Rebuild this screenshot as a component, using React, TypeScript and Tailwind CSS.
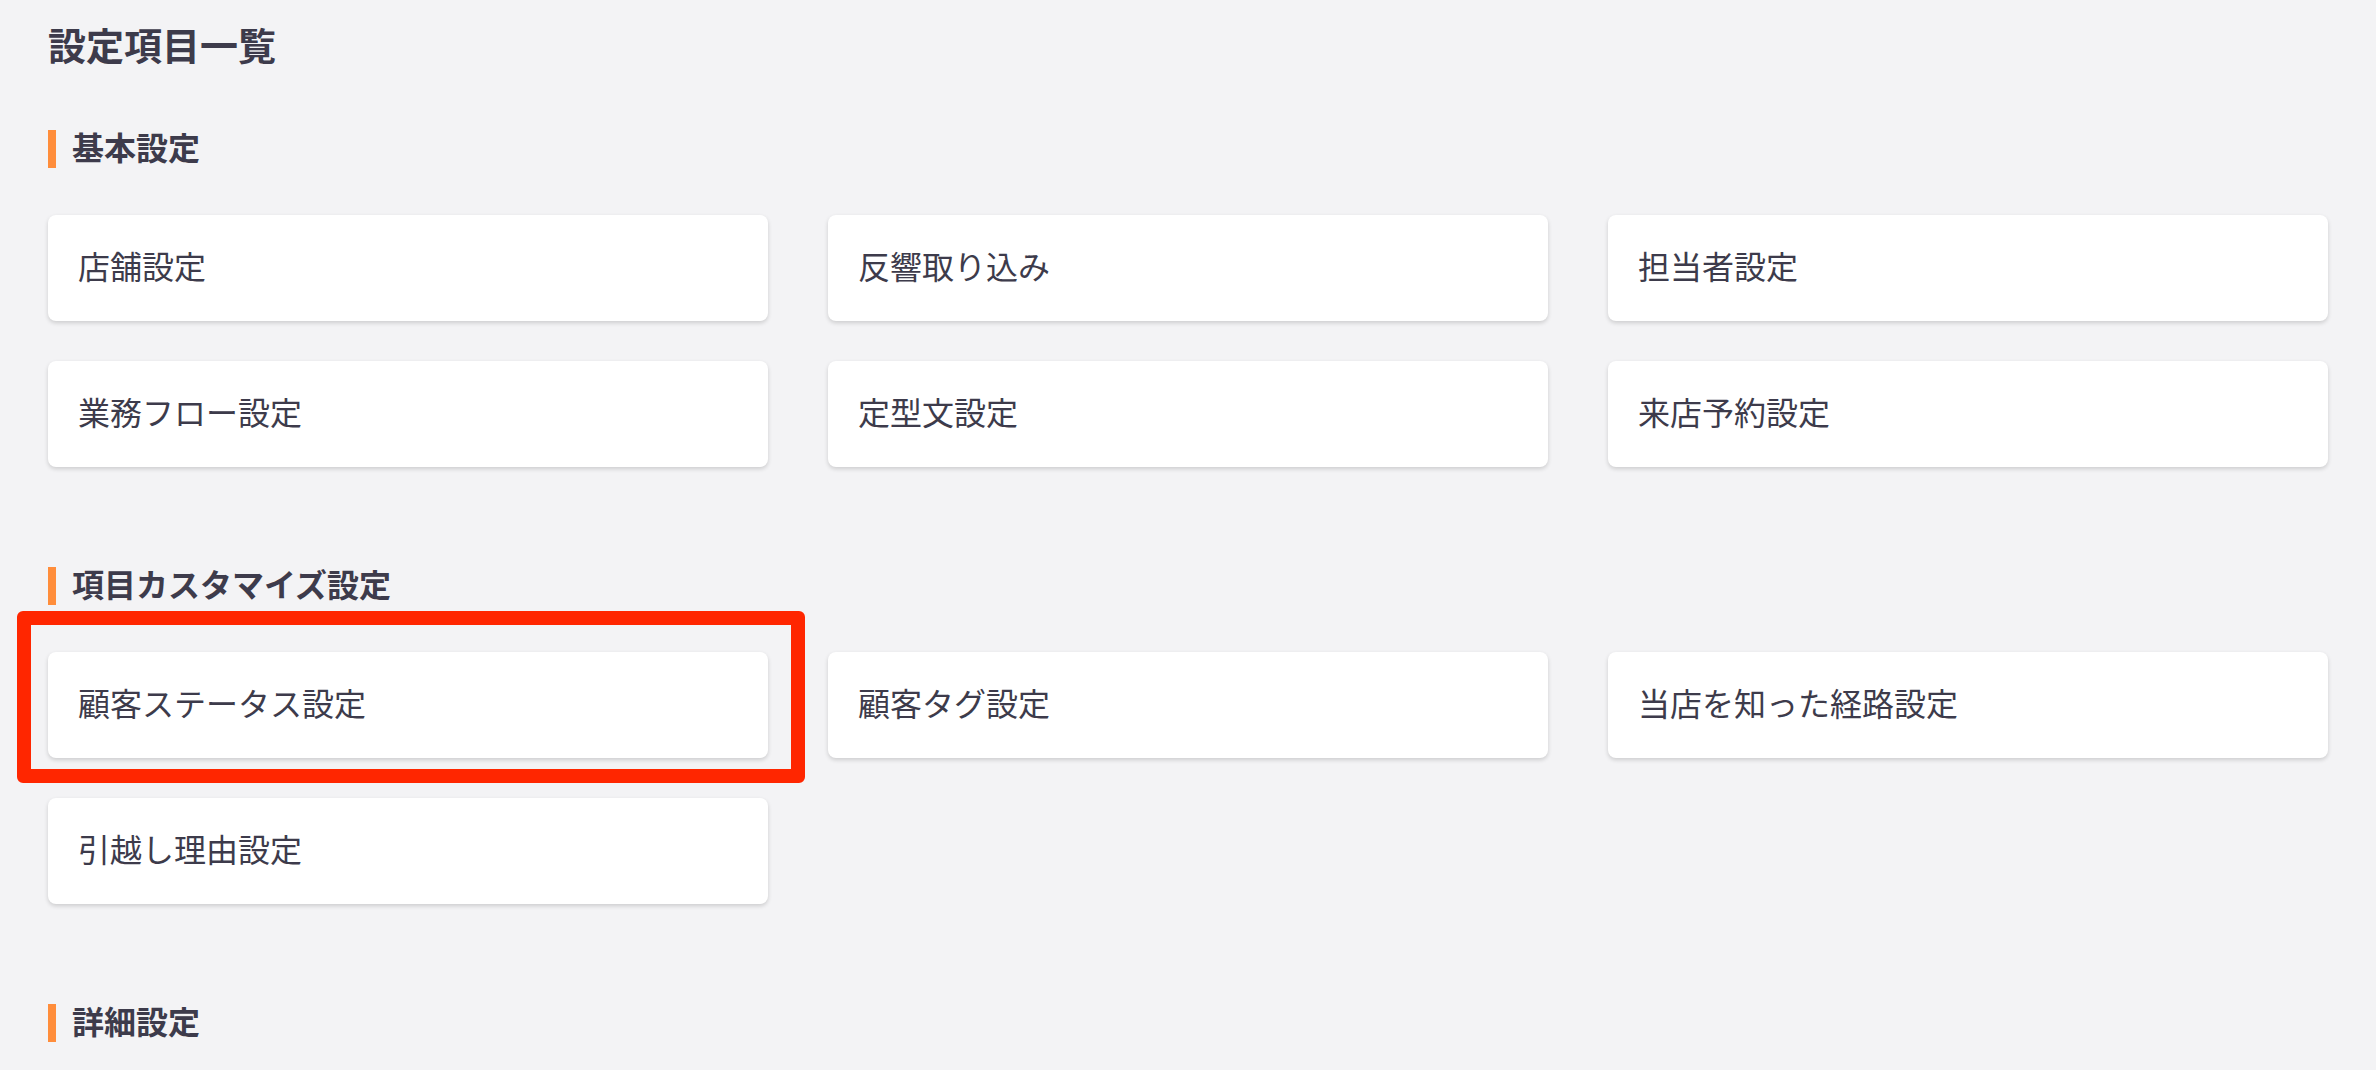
import React from "react";

type Section = {
  title: string;
  items: string[];
};

const sections: Section[] = [
  {
    title: "基本設定",
    items: ["店舗設定", "反響取り込み", "担当者設定", "業務フロー設定", "定型文設定", "来店予約設定"],
  },
  {
    title: "項目カスタマイズ設定",
    items: ["顧客ステータス設定", "顧客タグ設定", "当店を知った経路設定", "引越し理由設定"],
  },
  {
    title: "詳細設定",
    items: [],
  },
];

const SectionHeader: React.FC<{ title: string }> = ({ title }) => (
  <div className="flex items-center h-[38px]">
    <span className="block w-2 h-[38px] bg-[#ff8d3b]" />
    <h2 className="ml-4 mb-[6px] text-[32px] leading-none font-bold text-[#3d3b4b]">{title}</h2>
  </div>
);

const SettingCard: React.FC<{ label: string; highlighted?: boolean }> = ({ label, highlighted }) => (
  <div className="relative">
    <button className="flex items-center w-full h-[106px] pl-[30px] pb-[7px] bg-white rounded-lg shadow-[0_2px_4px_rgba(0,0,0,0.16)] text-left cursor-pointer">
      <span className="text-[32px] leading-none text-[#3d3b4b]">{label}</span>
    </button>
    {/* annotation frame drawn over the page */}
    {highlighted && (
      <div className="absolute -left-[31px] -top-[41px] -right-[37px] -bottom-[25px] border-[14px] border-[#ff2600] rounded-[6px] pointer-events-none" />
    )}
  </div>
);

export default function App() {
  return (
    <div
      className="h-screen overflow-hidden bg-[#f3f3f5] px-12 pt-[25px]"
      style={{ fontFamily: '"Noto Sans CJK JP", "Noto Sans", sans-serif' }}
    >
      <h1 className="text-[38px] leading-none font-bold text-[#3d3b4b]">設定項目一覧</h1>

      <div className="mt-[67px] flex flex-col gap-[100px]">
        {sections.map((section) => (
          <section key={section.title}>
            <SectionHeader title={section.title} />
            {section.items.length > 0 && (
              <div className="mt-[47px] grid grid-cols-3 gap-x-[60px] gap-y-10">
                {section.items.map((item) => (
                  <SettingCard key={item} label={item} highlighted={item === "顧客ステータス設定"} />
                ))}
              </div>
            )}
          </section>
        ))}
      </div>
    </div>
  );
}
